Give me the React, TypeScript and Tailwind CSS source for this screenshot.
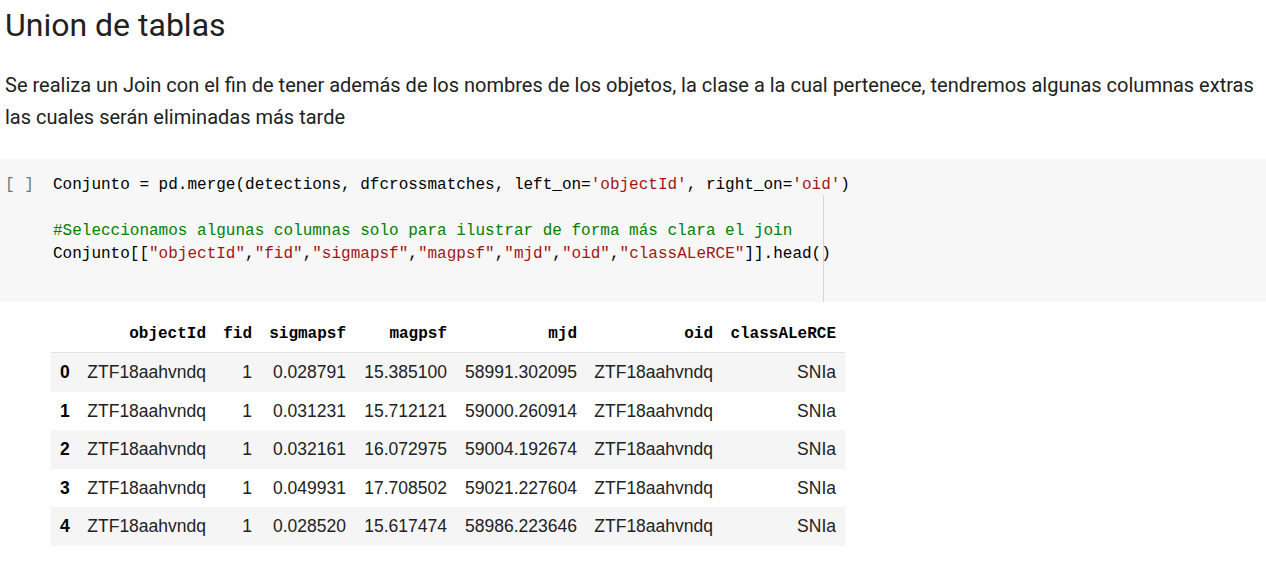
const rows = [
  ['0', 'ZTF18aahvndq', '1', '0.028791', '15.385100', '58991.302095', 'ZTF18aahvndq', 'SNIa'],
  ['1', 'ZTF18aahvndq', '1', '0.031231', '15.712121', '59000.260914', 'ZTF18aahvndq', 'SNIa'],
  ['2', 'ZTF18aahvndq', '1', '0.032161', '16.072975', '59004.192674', 'ZTF18aahvndq', 'SNIa'],
  ['3', 'ZTF18aahvndq', '1', '0.049931', '17.708502', '59021.227604', 'ZTF18aahvndq', 'SNIa'],
  ['4', 'ZTF18aahvndq', '1', '0.028520', '15.617474', '58986.223646', 'ZTF18aahvndq', 'SNIa'],
];

const headers = ['', 'objectId', 'fid', 'sigmapsf', 'magpsf', 'mjd', 'oid', 'classALeRCE'];

const mono = "font-['Liberation_Mono',monospace]";

function Str({ children }: { children: string }) {
  return <span className="text-[#a31515]">{children}</span>;
}

export default function App() {
  return (
    <main className="min-h-screen bg-white text-[#212121] font-['Roboto',sans-serif]">
      <h1 className="px-[5px] pt-[5px] text-[32px] leading-[40px] font-normal">Union de tablas</h1>

      <p className="px-[5px] pt-[24px] text-[20px] leading-[32px] whitespace-nowrap">
        Se realiza un Join con el fin de tener además de los nombres de los objetos, la clase a la cual pertenece, tendremos algunas columnas extras
        <br />
        las cuales serán eliminadas más tarde
      </p>

      {/* Code cell */}
      <section className="mt-[26px] h-[143px] bg-[#f7f7f7] flex relative">
        <div className={`${mono} w-[53px] pl-[5px] pt-[15px] text-[16px] leading-[23px] text-[#757575]`}>[ ]</div>
        <pre className={`${mono} pt-[15px] text-[16px] leading-[23px] text-[#000000]`}>
          {'Conjunto = pd.merge(detections, dfcrossmatches, left_on='}
          <Str>{"'objectId'"}</Str>
          {', right_on='}
          <Str>{"'oid'"}</Str>
          {')\n\n'}
          <span className="text-[#008000]">#Seleccionamos algunas columnas solo para ilustrar de forma más clara el join</span>
          {'\nConjunto[['}
          <Str>{'"objectId"'}</Str>,<Str>{'"fid"'}</Str>,<Str>{'"sigmapsf"'}</Str>,<Str>{'"magpsf"'}</Str>,
          <Str>{'"mjd"'}</Str>,<Str>{'"oid"'}</Str>,<Str>{'"classALeRCE"'}</Str>
          {']].head()'}
        </pre>
        <div className="absolute left-[823px] top-[36px] bottom-0 w-px bg-[#d6d6d6]" />
      </section>

      {/* Output table */}
      <div className="pl-[51px] pt-[14px]">
        <div className="w-[794px] grid grid-cols-[28px_136px_46px_94px_101px_130px_136px_123px] font-['Liberation_Sans',Arial,sans-serif] text-[17.5px] text-[#222222]">
          {headers.map((h, i) => (
            <div
              key={'h' + i}
              className={`${mono} font-bold text-[16px] h-[37px] pr-[9px] text-right leading-[37px] text-black border-b border-[#e0e0e0]`}
            >
              {h}
            </div>
          ))}
          {rows.map((r, ri) =>
            r.map((c, ci) => (
              <div
                key={ri + '-' + ci}
                className={`h-[38.5px] leading-[38.5px] ${ri % 2 === 0 ? 'bg-[#f5f5f5]' : 'bg-white'} ${
                  ci === 0 ? 'pl-[9px] font-bold text-black' : 'pr-[9px] text-right'
                }`}
              >
                {c}
              </div>
            ))
          )}
        </div>
      </div>
    </main>
  );
}
